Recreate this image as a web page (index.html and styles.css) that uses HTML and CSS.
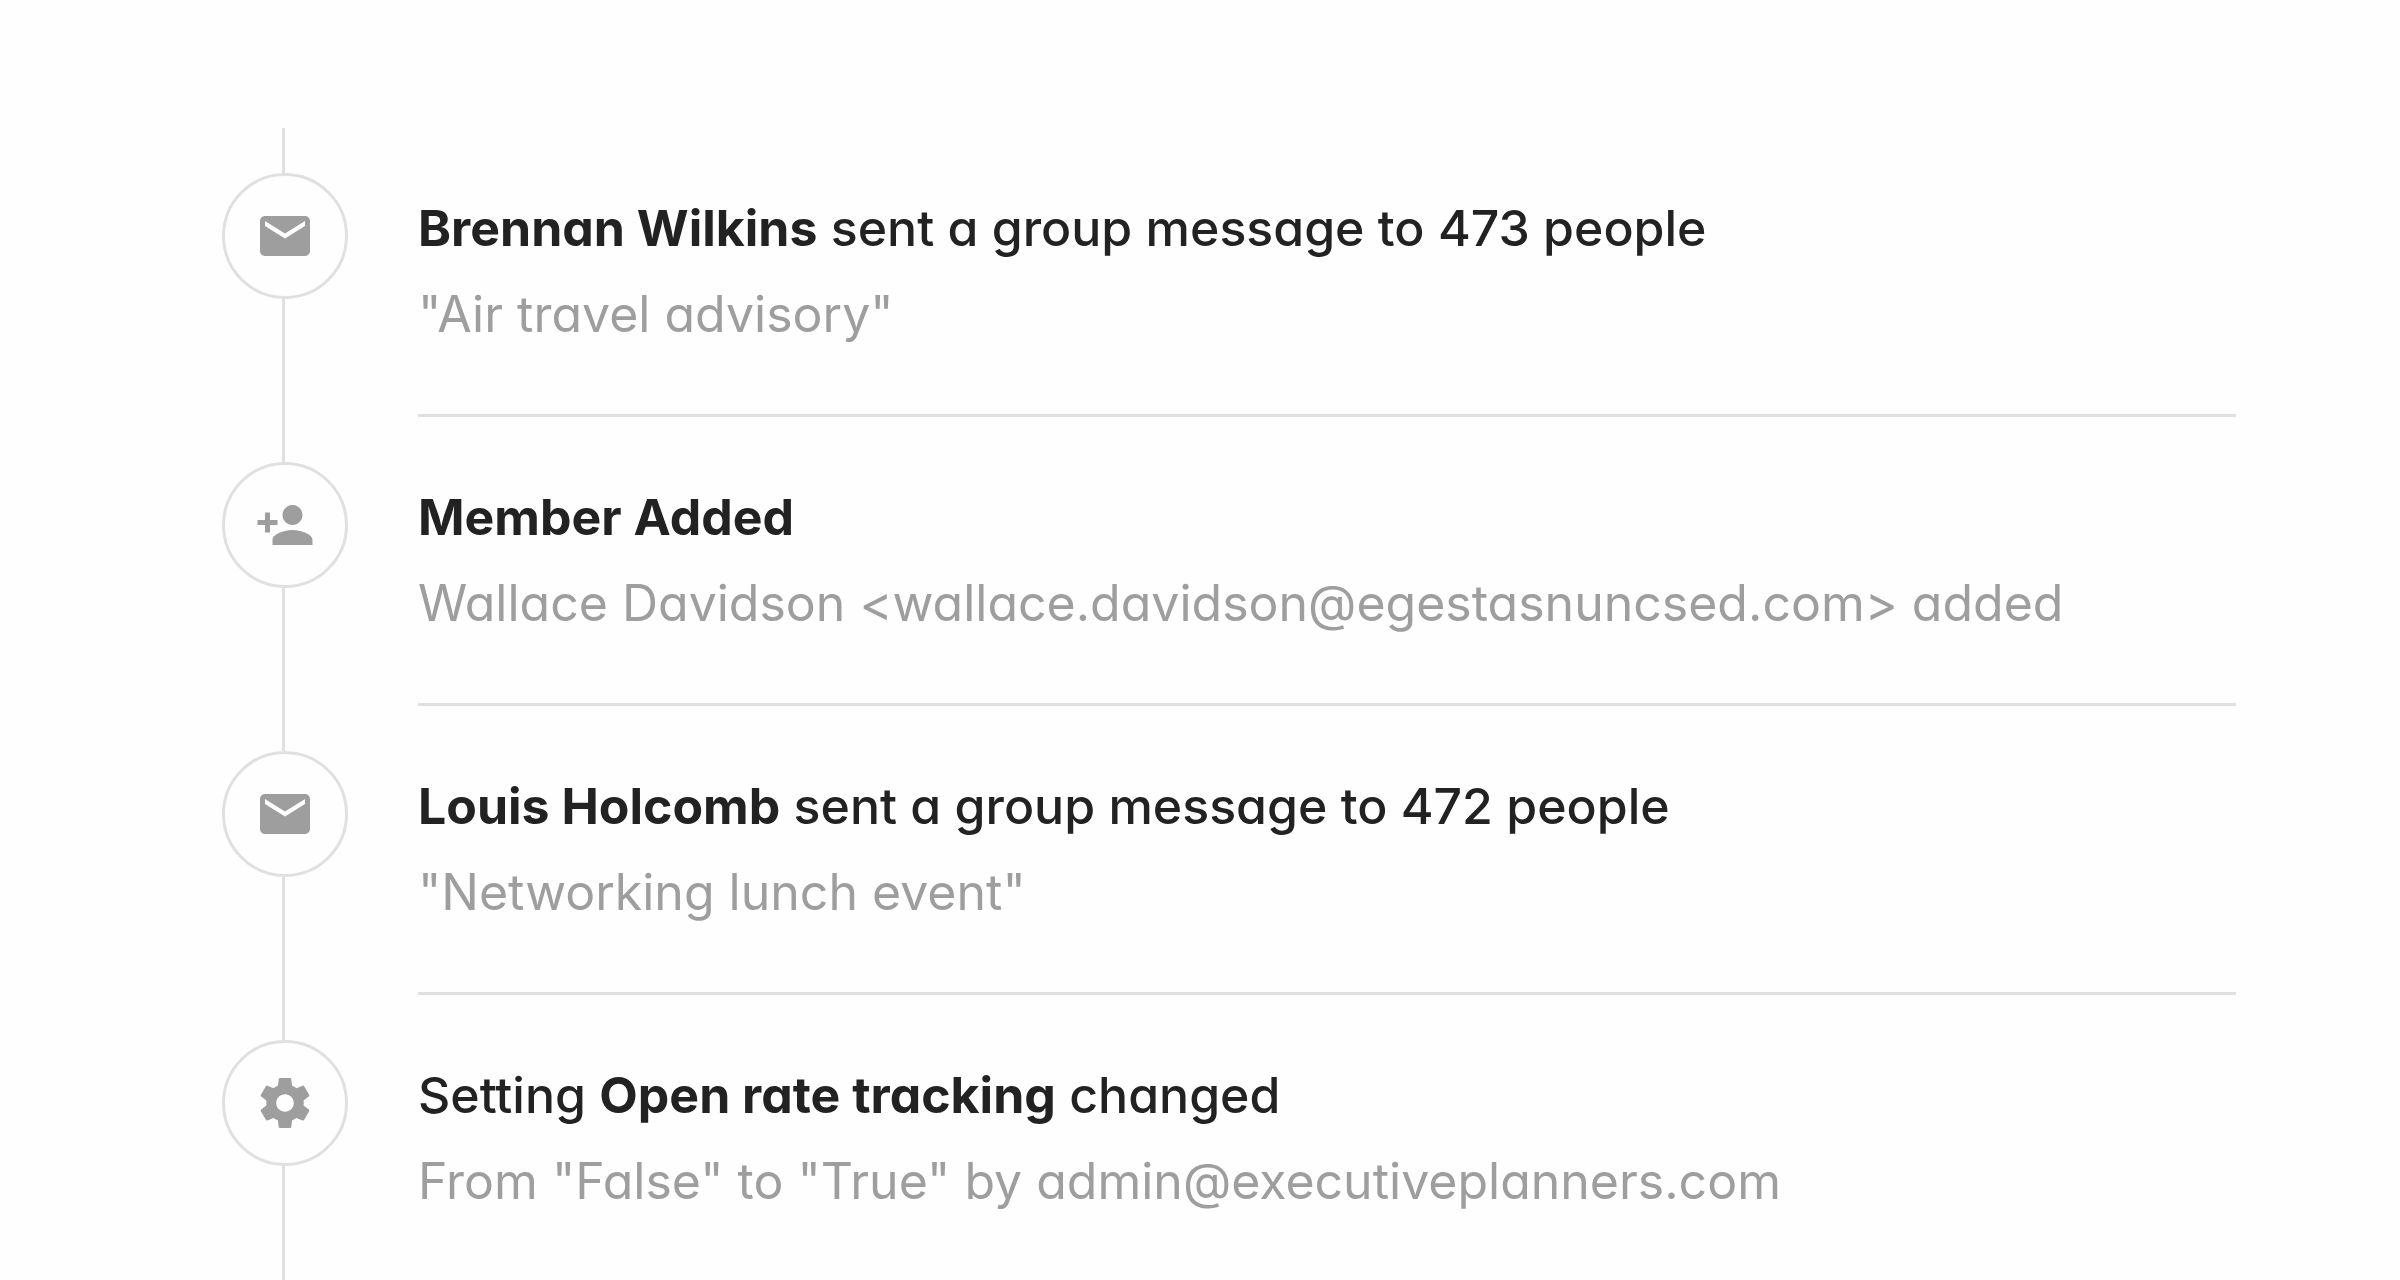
FILE: index.html
```html
<!DOCTYPE html>
<html lang="en">
<head>
    <meta charset="UTF-8">
    <meta name="viewport" content="width=device-width, initial-scale=1.0">
    <title>Activity</title>
    <link rel="stylesheet" href="styles.css">
</head>
<body>
    <ul class="timeline">
        <li class="event">
            <div class="marker">
                <div class="icon">
                    <svg viewBox="0 0 24 24"><path d="M20 4H4c-1.1 0-2 .9-2 2v12c0 1.1.9 2 2 2h16c1.1 0 2-.9 2-2V6c0-1.1-.9-2-2-2zm0 4l-8 5-8-5V6l8 5 8-5v2z"/></svg>
                </div>
            </div>
            <div class="content">
                <p class="title"><strong>Brennan Wilkins</strong> sent a group message to 473 people</p>
                <p class="detail">"Air travel advisory"</p>
            </div>
        </li>
        <li class="event">
            <div class="marker">
                <div class="icon">
                    <svg viewBox="0 0 24 24"><path d="M15 12c2.21 0 4-1.79 4-4s-1.79-4-4-4-4 1.79-4 4 1.79 4 4 4zm-9-2V7H4v3H1v2h3v3h2v-3h3v-2H6zm9 4c-2.67 0-8 1.34-8 4v2h16v-2c0-2.66-5.33-4-8-4z"/></svg>
                </div>
            </div>
            <div class="content">
                <p class="title"><strong>Member Added</strong></p>
                <p class="detail">Wallace Davidson &lt;wallace.davidson@egestasnuncsed.com&gt; added</p>
            </div>
        </li>
        <li class="event">
            <div class="marker">
                <div class="icon">
                    <svg viewBox="0 0 24 24"><path d="M20 4H4c-1.1 0-2 .9-2 2v12c0 1.1.9 2 2 2h16c1.1 0 2-.9 2-2V6c0-1.1-.9-2-2-2zm0 4l-8 5-8-5V6l8 5 8-5v2z"/></svg>
                </div>
            </div>
            <div class="content">
                <p class="title"><strong>Louis Holcomb</strong> sent a group message to 472 people</p>
                <p class="detail">"Networking lunch event"</p>
            </div>
        </li>
        <li class="event">
            <div class="marker">
                <div class="icon">
                    <svg viewBox="0 0 24 24"><path d="M19.43 12.98c.04-.32.07-.64.07-.98s-.03-.66-.07-.98l2.11-1.65c.19-.15.24-.42.12-.64l-2-3.46c-.12-.22-.39-.3-.61-.22l-2.49 1c-.52-.4-1.08-.73-1.69-.98l-.38-2.65C14.46 2.18 14.25 2 14 2h-4c-.25 0-.46.18-.49.42l-.38 2.65c-.61.25-1.17.59-1.69.98l-2.49-1c-.23-.09-.49 0-.61.22l-2 3.46c-.13.22-.07.49.12.64l2.11 1.65c-.04.32-.07.65-.07.98s.03.66.07.98l-2.11 1.65c-.19.15-.24.42-.12.64l2 3.46c.12.22.39.3.61.22l2.49-1c.52.4 1.08.73 1.69.98l.38 2.65c.03.24.24.42.49.42h4c.25 0 .46-.18.49-.42l.38-2.65c.61-.25 1.17-.59 1.69-.98l2.49 1c.23.09.49 0 .61-.22l2-3.46c.12-.22.07-.49-.12-.64l-2.11-1.65zM12 15.5c-1.93 0-3.5-1.57-3.5-3.5s1.57-3.5 3.5-3.5 3.5 1.57 3.5 3.5-1.57 3.5-3.5 3.5z"/></svg>
                </div>
            </div>
            <div class="content">
                <p class="title">Setting <strong>Open rate tracking</strong> changed</p>
                <p class="detail">From "False" to "True" by admin@executiveplanners.com</p>
            </div>
        </li>
    </ul>
</body>
</html>
```
FILE: styles.css
```css
* {
    box-sizing: border-box;
}
body {
    margin: 0;
    height: 100vh;
    overflow: hidden;
    background: #fefefe;
    color: #222;
    font-family: Inter, "Liberation Sans", sans-serif;
    font-feature-settings: "cv11";
    font-size: 50px;
    line-height: 86px;
}
.timeline {
    list-style: none;
    margin: 0;
    padding: 128px 164px 0 222px;
}
.event {
    display: flex;
    gap: 70px;
}
.marker {
    flex: none;
    display: flex;
    flex-direction: column;
    width: 126px;
}
/* connecting line above and below the circle */
.marker::before,
.marker::after {
    content: "";
    width: 3px;
    height: 45px;
    margin-left: 60px;
    background: #e0e0e0;
}
.marker::after {
    flex: 1;
}
.icon {
    display: flex;
    justify-content: center;
    align-items: center;
    height: 126px;
    border: 3px solid #e0e0e0;
    border-radius: 50%;
}
.icon svg {
    width: 60px;
    height: 60px;
    fill: #9e9e9e;
}
.content {
    flex: 1;
    padding: 57px 0;
    border-bottom: 3px solid #e0e0e0;
}
.title,
.detail {
    margin: 0;
}
.title {
    font-weight: 500;
}
.title strong {
    font-weight: 700;
}
.detail {
    color: #9e9e9e;
}
```
